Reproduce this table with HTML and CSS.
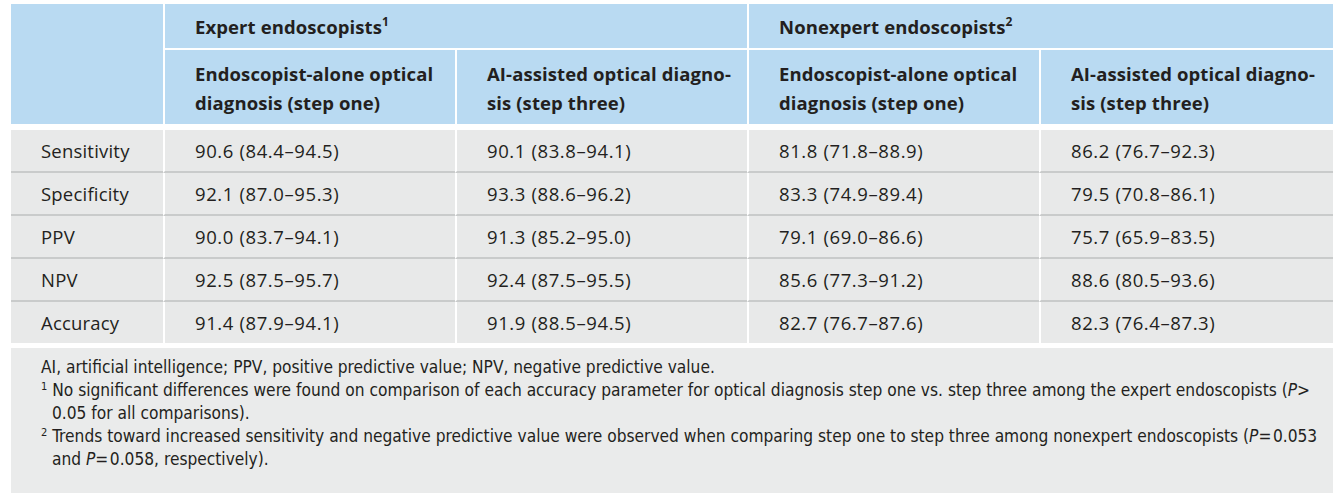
FILE: index.html
```html
<!DOCTYPE html>
<html lang="en">
<head>
<meta charset="utf-8">
<title>Table</title>
<link rel="stylesheet" href="styles.css">
</head>
<body>
<div class="wrap">
  <table class="data">
    <colgroup>
      <col class="c-first">
      <col class="c-data">
      <col class="c-data">
      <col class="c-data">
      <col class="c-last">
    </colgroup>
    <thead>
      <tr class="h1">
        <th class="corner" rowspan="2"></th>
        <th colspan="2" class="group">Expert endoscopists<sup>1</sup></th>
        <th colspan="2" class="group">Nonexpert endoscopists<sup>2</sup></th>
      </tr>
      <tr class="h2">
        <th class="sub">Endoscopist-alone optical diagnosis (step one)</th>
        <th class="sub">AI-assisted optical diagno-<br>sis (step three)</th>
        <th class="sub">Endoscopist-alone optical diagnosis (step one)</th>
        <th class="sub">AI-assisted optical diagno-<br>sis (step three)</th>
      </tr>
    </thead>
    <tbody>
      <tr>
        <td class="label">Sensitivity</td>
        <td>90.6 (84.4–94.5)</td>
        <td>90.1 (83.8–94.1)</td>
        <td>81.8 (71.8–88.9)</td>
        <td>86.2 (76.7–92.3)</td>
      </tr>
      <tr>
        <td class="label">Specificity</td>
        <td>92.1 (87.0–95.3)</td>
        <td>93.3 (88.6–96.2)</td>
        <td>83.3 (74.9–89.4)</td>
        <td>79.5 (70.8–86.1)</td>
      </tr>
      <tr>
        <td class="label">PPV</td>
        <td>90.0 (83.7–94.1)</td>
        <td>91.3 (85.2–95.0)</td>
        <td>79.1 (69.0–86.6)</td>
        <td>75.7 (65.9–83.5)</td>
      </tr>
      <tr>
        <td class="label">NPV</td>
        <td>92.5 (87.5–95.7)</td>
        <td>92.4 (87.5–95.5)</td>
        <td>85.6 (77.3–91.2)</td>
        <td>88.6 (80.5–93.6)</td>
      </tr>
      <tr class="last">
        <td class="label">Accuracy</td>
        <td>91.4 (87.9–94.1)</td>
        <td>91.9 (88.5–94.5)</td>
        <td>82.7 (76.7–87.6)</td>
        <td>82.3 (76.4–87.3)</td>
      </tr>
    </tbody>
  </table>
  <div class="notes">
    <p class="note">AI, artificial intelligence; PPV, positive predictive value; NPV, negative predictive value.</p>
    <p class="note fn"><sup>1</sup> No significant differences were found on comparison of each accuracy parameter for optical diagnosis step one vs. step three among the expert endoscopists (<i>P</i>&gt;<br>0.05 for all comparisons).</p>
    <p class="note fn"><sup>2</sup> Trends toward increased sensitivity and negative predictive value were observed when comparing step one to step three among nonexpert endoscopists (<i>P</i>=&#8202;0.053<br>and <i>P</i>=&#8202;0.058, respectively).</p>
  </div>
</div>
</body>
</html>
```

FILE: styles.css
```css
html, body {
  margin: 0;
  padding: 0;
  background: #ffffff;
}

.wrap {
  padding: 4px 11px 0 11px;
  width: 1322px;
  font-family: "Open Sans", "Noto Sans", sans-serif;
  color: #231f20;
}

.data {
  width: 1322px;
  table-layout: fixed;
  border-collapse: separate;
  border-spacing: 0;
  font-size: 18.5px;
}

.c-first { width: 152px; }
.c-data { width: 292px; }
.c-last { width: 294px; }

.data th,
.data td {
  text-align: left;
  vertical-align: middle;
  padding: 0 6px 0 30px;
  border-left: 2px solid #ffffff;
}

.data th.corner,
.data td.label {
  border-left: 0;
  padding-left: 30px;
}

.data thead th {
  background: #b9daf2;
  font-weight: 700;
  letter-spacing: 0.1px;
}

.h1 th {
  height: 43px;
  border-bottom: 2px solid #ffffff;
  padding-top: 1px;
}

.data th.corner {
  border-bottom: 6px solid #ffffff;
}

.h2 th {
  line-height: 29px;
  padding-top: 9px;
  padding-bottom: 7px;
  height: 58px;
  border-bottom: 6px solid #ffffff;
}

.data sup {
  font-size: 12px;
  line-height: 0;
  vertical-align: 8px;
}

.data td {
  background: #e8e9e9;
  height: 41px;
  line-height: 24px;
  border-bottom: 2px solid #c9cbcb;
  font-weight: 400;
  letter-spacing: 0.6px;
}

.data td.label {
  letter-spacing: 0.2px;
}

.data tr.last td {
  height: 41px;
  border-bottom: 0;
}

.notes {
  margin-top: 5px;
  background: #eaebeb;
  height: 145px;
  box-sizing: border-box;
  padding: 8px 0 0 30px;
  font-family: "Liberation Sans Narrow", "DejaVu Sans Condensed", sans-serif;
  font-stretch: condensed;
  font-size: 17.2px;
  line-height: 23px;
}

.note {
  margin: 0;
}

.note.fn {
  padding-left: 11px;
  text-indent: -11px;
  white-space: nowrap;
}

.note sup {
  font-size: 11px;
  line-height: 0;
  vertical-align: 6px;
}
```
